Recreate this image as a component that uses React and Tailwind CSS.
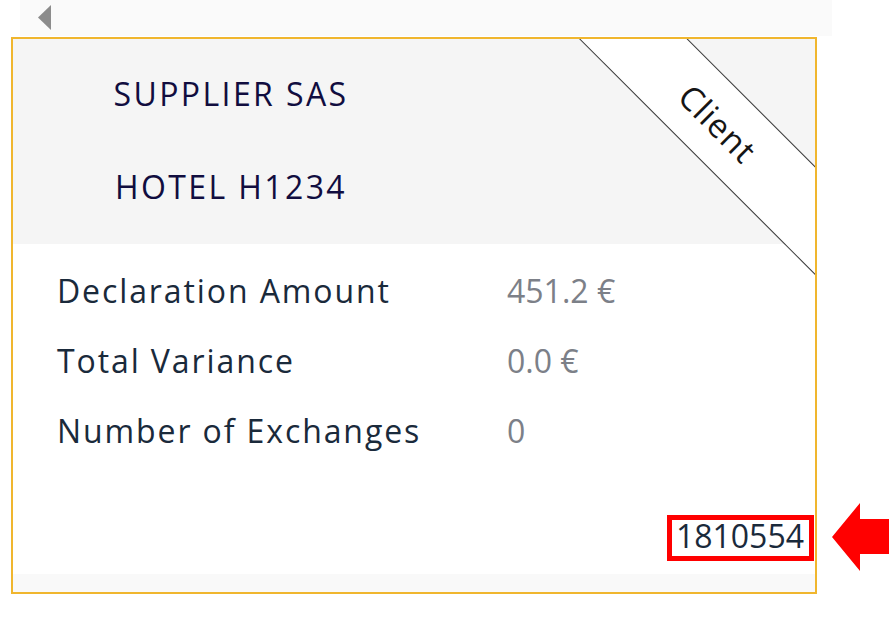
import React from "react";

export default function App() {
  const font = { fontFamily: '"Open Sans", "Liberation Sans", sans-serif' };
  return (
    <div className="relative w-[889px] h-[617px] bg-white overflow-hidden" style={font}>
      {/* top bar */}
      <div className="ml-[20px] w-[812px] h-[36px] bg-[#fafafa] flex items-center pl-[18px]">
        <svg width="14" height="26" viewBox="0 0 14 26">
          <polygon points="13,0 13,25 0,12.5" fill="#8c8c8c" />
        </svg>
      </div>

      {/* card */}
      <div className="relative ml-[11px] mt-[1px] w-[806px] h-[557px] border-2 border-[#f0b62e] overflow-hidden flex flex-col bg-white">
        <div className="h-[205px] bg-[#f5f5f5] shrink-0">
          <div className="w-[436px] pt-[8px] flex flex-col items-center text-[32px] leading-[93px] text-[#110d3f] tracking-[2.4px]">
            <div>SUPPLIER SAS</div>
            <div>HOTEL H1234</div>
          </div>
        </div>

        <div className="flex-1 flex flex-col">
          <div className="pl-[44px] pt-[12px] text-[32px] leading-[70px]">
            <div className="flex">
              <div className="w-[450px] text-[#1a2a3b] tracking-[1.9px]">Declaration Amount</div>
              <div className="text-[#7c8088]">451.2 €</div>
            </div>
            <div className="flex">
              <div className="w-[450px] text-[#1a2a3b] tracking-[1.9px]">Total Variance</div>
              <div className="text-[#7c8088]">0.0 €</div>
            </div>
            <div className="flex">
              <div className="w-[450px] text-[#1a2a3b] tracking-[1.9px]">Number of Exchanges</div>
              <div className="text-[#7c8088]">0</div>
            </div>
          </div>
          <div className="mt-[50px] flex justify-end pr-[11px] text-[32px] leading-[40px] text-[#1a2a3b]">
            1810554
          </div>
          <div className="mt-auto h-[18px] bg-[#f9f9f9]" />
        </div>

        {/* ribbon */}
        <div className="absolute left-[505px] top-[46px] w-[400px] h-[77px] rotate-45 bg-white border-y-[1.5px] border-[#3a3a3a] flex items-center justify-center text-[33px] tracking-[1px] text-[#151515]">
          Client
        </div>
      </div>

      {/* annotation box */}
      <div className="absolute left-[667px] top-[515px] w-[147px] h-[46px] border-[5px] border-[#ff0000]" />

      {/* red arrow */}
      <svg className="absolute left-[832px] top-[503px]" width="57" height="68" viewBox="0 0 57 68">
        <polygon points="0,34 28,0 28,16 57,16 57,51 28,51 28,68" fill="#ff0000" />
      </svg>
    </div>
  );
}
